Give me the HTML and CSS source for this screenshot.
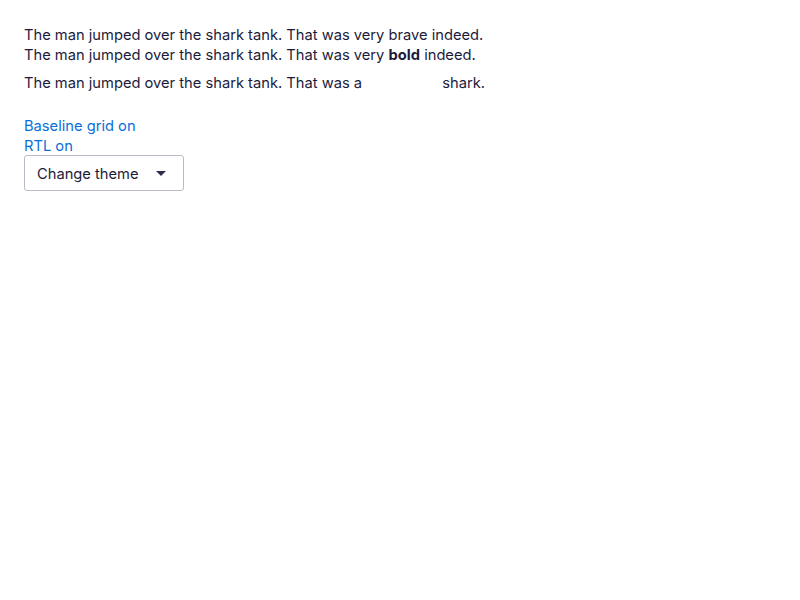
FILE: index.html
```html
<!DOCTYPE html>
<html>
<head>
<meta charset="utf-8">
<link rel="stylesheet" href="styles.css">
</head>
<body>
<div class="page">
  <p class="text">The man jumped over the shark tank. That was very brave indeed.</p>
  <p class="text">The man jumped over the shark tank. That was very <strong>bold</strong> indeed.</p>
  <p class="text spaced">The man jumped over the shark tank. That was a <span class="blank"></span> shark.</p>
  <div class="links">
    <a class="link" href="#">Baseline grid on</a>
    <a class="link" href="#">RTL on</a>
  </div>
  <button class="select">Change theme <span class="caret"></span></button>
</div>
</body>
</html>
```
FILE: styles.css
```css
html, body { margin: 0; padding: 0; background: #fff; }
body { font-family: "Inter", "Liberation Sans", sans-serif; color: #1c1b3c; }
.page { padding: 25px 24px; display: flex; flex-direction: column; align-items: flex-start; }
.text { margin: 0; font-size: 14.7px; line-height: 20px; }
.text strong { font-weight: 700; }
.spaced { margin-top: 8px; }
.blank { display: inline-block; width: 72px; }
.links { display: flex; flex-direction: column; margin-top: 23px; }
.link { color: #0a6fd8; text-decoration: none; font-size: 14.7px; line-height: 20px; }
.select { margin-top: -1px; width: 160px; height: 36px; border: 1px solid #b9bcc6; border-radius: 3px; background: #fff; font-family: inherit; font-size: 14.7px; color: #1c1b3c; display: flex; align-items: center; padding: 1px 0 0 12px; }
.caret { margin-left: auto; margin-right: 17px; width: 0; height: 0; border-left: 5px solid transparent; border-right: 5px solid transparent; border-top: 5px solid #2d2d4a; }
```
